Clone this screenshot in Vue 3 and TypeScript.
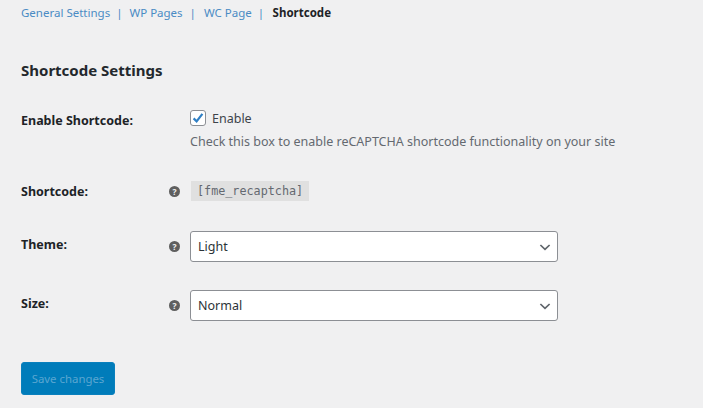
<script setup lang="ts">
const tabs: string[] = ['General Settings', 'WP Pages', 'WC Page']
const selects = [
  { label: 'Theme:', value: 'Light' },
  { label: 'Size:', value: 'Normal' },
]
</script>

<template>
  <div class="page">
    <nav class="tabs">
      <template v-for="t in tabs" :key="t">
        <a class="tab">{{ t }}</a><span class="sep">|</span>
      </template>
      <strong class="current">Shortcode</strong>
    </nav>
    <h2 class="title">Shortcode Settings</h2>

    <div class="row row-enable">
      <div class="label">Enable Shortcode:</div>
      <div class="control">
        <label class="check">
          <span class="box">
            <svg width="14" height="14" viewBox="0 0 14 14"><path d="M2.6 7.4 5.6 10.4 11.4 2.8" fill="none" stroke="#2f7fc4" stroke-width="2.2" /></svg>
          </span>
          <span>Enable</span>
        </label>
        <p class="desc">Check this box to enable reCAPTCHA shortcode functionality on your site</p>
      </div>
    </div>

    <div class="row row-code">
      <div class="label">Shortcode:</div>
      <span class="help">?</span>
      <code class="code">[fme_recaptcha]</code>
    </div>

    <div v-for="s in selects" :key="s.label" class="row row-select">
      <div class="label">{{ s.label }}</div>
      <span class="help">?</span>
      <div class="select">
        <span>{{ s.value }}</span>
        <svg width="14" height="14" viewBox="0 0 14 14"><path d="M2.4 5 7 9.4 11.6 5" fill="none" stroke="#5f656b" stroke-width="1.7" /></svg>
      </div>
    </div>

    <button class="save" type="button">Save changes</button>
  </div>
</template>

<style scoped>
.page {
  width: 703px;
  height: 408px;
  overflow: hidden;
  box-sizing: border-box;
  background: #f0f0f1;
  padding: 4px 0 0 21px;
  font-family: "Noto Sans", "Open Sans", sans-serif;
  font-size: 12.5px;
  color: #3c434a;
}
.tabs {
  display: flex;
  align-items: center;
  height: 17px;
  font-size: 11.5px;
}
.tab { color: #4a8bc4; }
.sep { color: #4a8bc4; margin: 0 8.5px 0 6px; }
.sep:nth-of-type(1) { margin: 0 7px 0 6px; }
.sep:nth-of-type(2) { margin: 0 8px 0 7px; }
.current { color: #1d2327; font-weight: 700; }
.title {
  margin: 39px 0 0;
  font-size: 15px;
  line-height: 20px;
  font-weight: 700;
  color: #23282d;
}
.row {
  display: grid;
  grid-template-columns: 148px 21px 1fr;
  align-items: center;
}
.label {
  font-weight: 700;
  font-size: 12.5px;
  color: #1d2327;
}
.row-enable { margin-top: 29px; align-items: start; }
.row-enable .label { margin-top: 3px; }
.row-enable .control { grid-column: 3; }
.check { display: flex; align-items: center; gap: 6px; height: 18px; }
.box {
  width: 14px;
  height: 14px;
  border: 1px solid #8c8f94;
  border-radius: 3px;
  background: #fff;
  display: flex;
}
.desc { margin: 6px 0 0; line-height: 18px; color: #646970; }
.row-code { margin-top: 30px; }
.help {
  width: 11px;
  height: 11px;
  border-radius: 50%;
  background: #5f5f5f;
  color: #f0f0f1;
  font-size: 8.5px;
  font-weight: 700;
  line-height: 11px;
  text-align: center;
}
.code {
  justify-self: start;
  margin-left: 1px;
  background: #e0e0e0;
  padding: 0 6px;
  height: 20px;
  line-height: 20px;
  font-family: "DejaVu Sans Mono", monospace;
  font-size: 11.75px;
  color: #646970;
}
.row-select { margin-top: 28px; }
.row-select .label { margin-top: -4px; }
.row-select .help { margin-top: -1px; }
.row-code + .row-select { margin-top: 30px; }
.select {
  position: relative;
  width: 368px;
  height: 31px;
  box-sizing: border-box;
  border: 1px solid #8c8f94;
  border-radius: 3px;
  background: #fff;
  padding: 0 5px 0 7px;
  display: flex;
  align-items: center;
  justify-content: space-between;
  color: #2c3338;
}
.save {
  display: block;
  margin-top: 41px;
  width: 94px;
  height: 33px;
  border: 1px solid #0a80bd;
  border-radius: 3px;
  background: #007cba;
  color: #5aa6d1;
  font: inherit;
  font-size: 11.4px;
  padding: 0;
}
</style>

<style>
html, body { margin: 0; background: #f0f0f1; }
</style>
